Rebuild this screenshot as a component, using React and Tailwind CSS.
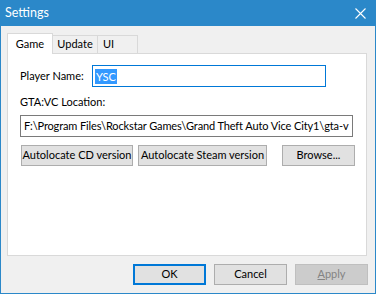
import React from 'react';

const Btn = ({ children, className = '' }) => (
  <button className={`h-[21px] flex items-center justify-center whitespace-nowrap bg-[#e1e1e1] border border-[#adadad] text-black ${className}`}>
    {children}
  </button>
);

const App = () => {
  return (
    <div className="w-[376px] h-[294px] bg-[#2b88c9] flex flex-col text-[11px] text-black whitespace-nowrap" style={{ fontFamily: 'Lato, "Noto Sans", sans-serif' }}>
      {/* Title bar */}
      <div className="h-[26px] flex items-center justify-between pl-[5px] pr-[10px] text-white">
        <span className="text-[12.5px] leading-none">Settings</span>
        <svg width="11" height="11" viewBox="0 0 11 11" className="mt-[1px]">
          <path d="M0.5 0.5 L10.5 10.5 M10.5 0.5 L0.5 10.5" stroke="white" strokeWidth="1.1" />
        </svg>
      </div>

      {/* Body */}
      <div className="flex-1 mx-[1px] mb-[1px] bg-[#f0f0f0] flex flex-col pt-[7px] pl-[6px] pr-[8px]">
        {/* Tabs */}
        <div className="flex items-end h-[20px]">
          <div className="h-[21px] w-[46px] -mb-px relative z-10 bg-white border border-b-0 border-[#d9d9d9] flex items-center justify-center">Game</div>
          <div className="h-[18px] w-[45px] border border-b-0 border-l-0 border-[#d9d9d9] flex items-center justify-center">Update</div>
          <div className="h-[18px] w-[40px] border border-b-0 border-l-0 border-[#d9d9d9] flex items-center pl-[5px]">UI</div>
        </div>

        {/* Panel */}
        <div className="h-[203px] bg-white border border-[#d9d9d9] pt-[11px] pl-[12px] flex flex-col">
          <div className="flex items-center h-[22px]">
            <span className="w-[72px]">Player Name:</span>
            <div className="w-[234px] h-[22px] border border-[#0078d7] flex items-center pl-[2px]">
              <span className="bg-[#3399ff] text-white px-[1px] leading-[15px]">YSC</span>
            </div>
          </div>
          <div className="mt-[7px] leading-[15px]">GTA:VC Location:</div>
          <div className="mt-[6px] w-[333px] h-[22px] border border-[#7a7a7a] flex items-center pl-[3px] overflow-hidden tracking-[-0.12px]">
            F:\Program Files\Rockstar Games\Grand Theft Auto Vice City1\gta-v
          </div>
          <div className="mt-[8px] flex items-center pl-[1px]">
            <Btn className="w-[112px]">Autolocate CD version</Btn>
            <Btn className="w-[129px] ml-[5px]">Autolocate Steam version</Btn>
            <Btn className="w-[73px] ml-[15px]">Browse...</Btn>
          </div>
        </div>

        {/* Footer buttons */}
        <div className="flex justify-end gap-[8px] mt-[8px] mr-[-1px]">
          <button className="w-[73px] h-[21px] bg-[#e1e1e1] border-2 border-[#0078d7] flex items-center justify-center">OK</button>
          <Btn className="w-[73px]">Cancel</Btn>
          <button className="w-[73px] h-[21px] bg-[#cccccc] border border-[#bfbfbf] text-[#838383] flex items-center justify-center">
            <span><span className="underline">A</span>pply</span>
          </button>
        </div>
      </div>
    </div>
  );
};

export default App;
